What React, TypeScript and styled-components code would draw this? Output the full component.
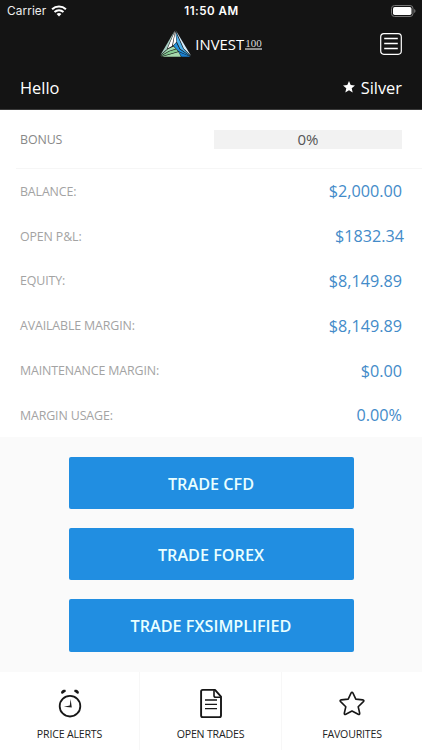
import React from "react";
import styled, { createGlobalStyle } from "styled-components";

const GlobalStyle = createGlobalStyle`
  * { box-sizing: border-box; }
  body { margin: 0; background: #fafafa; font-family: "Open Sans", "Noto Sans", sans-serif; }
`;

const Screen = styled.div`
  width: 422px;
  height: 750px;
  display: flex;
  flex-direction: column;
  overflow: hidden;
  background: #fafafa;
`;

const Header = styled.header`
  height: 110px;
  flex: none;
  background: #141414;
  border-bottom: 1px solid #3a3a3a;
  color: #fff;
`;

const StatusBar = styled.div`
  height: 22px;
  padding: 0 6px 0 7px;
  display: grid;
  grid-template-columns: 1fr auto 1fr;
  align-items: center;
  font-family: Inter, sans-serif;
`;

const Carrier = styled.div`
  display: flex;
  align-items: center;
  gap: 5px;
  font-size: 11.8px;
  letter-spacing: 0.1px;
  color: #eee;
`;

const Clock = styled.div`
  font-size: 11.6px;
  font-weight: 600;
  letter-spacing: 0.5px;
`;

const BatterySlot = styled.div`
  display: flex;
  justify-content: flex-end;
`;

const BrandBar = styled.div`
  height: 43px;
  padding: 0 20px;
  display: grid;
  grid-template-columns: 1fr auto 1fr;
  align-items: center;
`;

const Brand = styled.div`
  grid-column: 2;
  display: flex;
  align-items: center;
  gap: 4px;
`;

const BrandName = styled.div`
  display: flex;
  align-items: flex-start;
  font-size: 14.8px;
  letter-spacing: 0.05px;
  line-height: 20px;
`;

const BrandNumber = styled.span`
  margin: 5px 0 0 1px;
  height: 11px;
  border-bottom: 2px solid #8e8e8e;
  font-family: "Liberation Serif", serif;
  font-size: 11px;
  letter-spacing: 0;
  line-height: 8px;
  color: #ddd;
`;

const MenuButton = styled.button`
  justify-self: end;
  width: 22px;
  height: 22px;
  padding: 0;
  border: 0;
  background: none;
  svg { display: block; }
`;

const Greeting = styled.div`
  height: 44px;
  padding: 0 20px;
  display: flex;
  align-items: center;
  justify-content: space-between;
  font-size: 16.4px;
`;

const Tier = styled.div`
  display: flex;
  align-items: center;
  gap: 6px;
`;

const Account = styled.section`
  height: 327px;
  flex: none;
  background: #fff;
`;

const BonusRow = styled.div`
  height: 59px;
  margin-left: 16px;
  padding: 0 20px 0 4px;
  display: flex;
  align-items: center;
  justify-content: space-between;
  border-bottom: 1px solid #f6f6f6;
  font-size: 12.4px;
  letter-spacing: -0.1px;
  color: #888;
`;

const BonusMeter = styled.div`
  width: 188px;
  height: 19px;
  background: #f2f2f2;
  text-align: center;
  font-size: 15px;
  letter-spacing: 0;
  line-height: 19px;
  color: #555;
`;

const StatRow = styled.div`
  height: 44.8px;
  padding: 0 20px;
  display: flex;
  align-items: center;
  justify-content: space-between;
`;

const StatLabel = styled.span`
  font-size: 12.4px;
  letter-spacing: -0.13px;
  color: #a3a3a3;
`;

const StatValue = styled.span<{ $outset?: number }>`
  margin-right: ${(p) => -(p.$outset ?? 0)}px;
  font-size: 16.2px;
  color: #438bc9;
`;

const Actions = styled.div`
  height: 235px;
  flex: none;
  padding: 20px 68.5px 0;
  display: flex;
  flex-direction: column;
  gap: 18.7px;
`;

const TradeButton = styled.button`
  height: 52.4px;
  flex: none;
  padding: 1px 0 0;
  border: 0;
  border-radius: 2px;
  background: #218ee1;
  color: #e9ffff;
  font: 600 16.2px "Open Sans", sans-serif;
`;

const TabBar = styled.nav`
  flex: 1;
  min-height: 0;
  display: grid;
  grid-template-columns: 139px 142px 141px;
  background: #fff;
`;

const Tab = styled.div`
  padding-top: 15px;
  display: flex;
  flex-direction: column;
  align-items: center;
  font-size: 10.6px;
  letter-spacing: -0.18px;
  line-height: 15px;
  color: #222;
  & + & { border-left: 1px solid #f7f7f7; }
  svg { display: block; margin-bottom: 6px; }
`;

const WifiIcon = () => (
  <svg width="16" height="12" viewBox="0 0 16 12" fill="none" stroke="#fff">
    <path d="M1.1 4.2C5 .6 11 .6 14.9 4.2" strokeWidth="2.1" />
    <path d="M3.5 7C6.1 4.8 9.9 4.8 12.5 7" strokeWidth="2" />
    <path d="M5.6 8.9C7 7.8 9 7.8 10.4 8.9L8 11.4Z" fill="#fff" stroke="none" />
  </svg>
);

const BatteryIcon = () => (
  <svg width="25" height="12" viewBox="0 0 25 12">
    <rect x=".5" y=".5" width="21.5" height="11" rx="3" fill="none" stroke="#777" />
    <rect x="2" y="2" width="18.5" height="8" rx="1.7" fill="#fff" />
    <path d="M23.3 4v4c1.5-.7 1.5-3.3 0-4Z" fill="#888" />
  </svg>
);

const LogoIcon = () => (
  <svg width="31" height="27" viewBox="0 0 31 27">
    <path d="M14.8 .6 .6 24.8 6.6 19.6Z" fill="#a9cfc4" />
    <path d="M15.2 .6 12 16 7.6 18.4Z" fill="#fff" />
    <path d="M15.4 1.6 16.4 12 12.8 15.8Z" fill="#fff" />
    <path d="M15.7 .2 31 25.8 23.8 18.6Z" fill="#d5ebf9" />
    <path d="M15.9 2.6 23.2 18.8 30.4 26 20.2 18.8 16.8 11.8Z" fill="#4fb0ea" />
    <path d="M16.2 12.6 19.6 19.2 30 26.2 18.6 21.2 13.6 15.8Z" fill="#2492dc" />
    <path d="M18.4 21.8 30.6 26.8H21.6Z" fill="#1a7fd0" />
    <path d="M.2 26 7.8 19.2 13.4 16.4 15.8 18.8 8.8 21Z" fill="#a2dbb0" />
    <path d="M.8 26.4 9 21.6 16.4 19.3 18 21.5 10.4 23.8Z" fill="#86cb93" />
    <path d="M2 26.8 10.8 24.3 18.4 22.1 21 26.8Z" fill="#a5d8ac" />
  </svg>
);

const MenuIcon = () => (
  <svg width="22" height="22" viewBox="0 0 22 22" fill="none" stroke="#fff">
    <rect x=".7" y=".7" width="20.6" height="20.6" rx="3.2" strokeWidth="1.2" />
    <path d="M4.2 5.5h13.6M4.2 10.5h13.6M4.2 15.5h13.6" strokeWidth="1.3" />
  </svg>
);

const TierStar = () => (
  <svg width="12" height="12" viewBox="0 0 12 12" fill="#fff">
    <path d="M6 0 7.7 4.1 12 4.4 8.7 7.3 9.7 11.6 6 9.3 2.3 11.6 3.3 7.3 0 4.4 4.3 4.1Z" />
  </svg>
);

const AlarmIcon = () => (
  <svg width="30" height="34" viewBox="0 0 30 34">
    <circle cx="15" cy="19.2" r="10.3" fill="none" stroke="#171717" strokeWidth="1.8" />
    <path d="M6.3 6.4C5.5 4.3 7.5 2.3 10.3 2.8L11 4.2 7.7 6.7ZM23.7 6.4C24.5 4.3 22.5 2.3 19.7 2.8L19 4.2 22.3 6.7Z" fill="#171717" />
    <path d="M15.6 12 16.8 20.6 8.8 19.8 14.8 18.6Z" fill="#222" />
  </svg>
);

const DocumentIcon = () => (
  <svg width="30" height="34" viewBox="0 0 30 34" fill="none" stroke="#171717" strokeLinejoin="round">
    <path d="M6.7 2.9h12.3l6 6.7v18.9q0 1.6-1.6 1.6H6.7q-1.6 0-1.6-1.6v-24q0-1.6 1.6-1.6Z" strokeWidth="1.9" />
    <path d="M18 3.2v5.2q0 1.8 1.8 1.8h4.8" strokeWidth="1.6" />
    <path d="M9 13h12M9 17.4h12M9 21.7h12" strokeWidth="1.3" />
  </svg>
);

const StarIcon = () => (
  <svg width="30" height="34" viewBox="0 0 30 34" fill="none" stroke="#171717" strokeWidth="1.6" strokeLinejoin="round">
    <path d="M14 6.2q1-2 2 0l2.8 5.9 6.9.8q2 .3.7 1.7l-5.2 5.1 1.5 6.5q.2 1.9-1.5 1L15 24l-6.2 3.2q-1.7.9-1.5-1l1.5-6.5-5.2-5.1q-1.3-1.4.7-1.7l6.9-.8Z" />
  </svg>
);

const stats = [
  { label: "BALANCE:", value: "$2,000.00" },
  { label: "OPEN P&L:", value: "$1832.34", outset: 2 },
  { label: "EQUITY:", value: "$8,149.89" },
  { label: "AVAILABLE MARGIN:", value: "$8,149.89" },
  { label: "MAINTENANCE MARGIN:", value: "$0.00" },
  { label: "MARGIN USAGE:", value: "0.00%" },
];

export default function App() {
  return (
    <Screen>
      <GlobalStyle />
      <Header>
        <StatusBar>
          <Carrier>Carrier <WifiIcon /></Carrier>
          <Clock>11:50 AM</Clock>
          <BatterySlot><BatteryIcon /></BatterySlot>
        </StatusBar>
        <BrandBar>
          <Brand>
            <LogoIcon />
            <BrandName>INVEST<BrandNumber>100</BrandNumber></BrandName>
          </Brand>
          <MenuButton aria-label="Menu"><MenuIcon /></MenuButton>
        </BrandBar>
        <Greeting>
          <span>Hello</span>
          <Tier><TierStar />Silver</Tier>
        </Greeting>
      </Header>
      <Account>
        <BonusRow>BONUS<BonusMeter>0%</BonusMeter></BonusRow>
        {stats.map((s) => (
          <StatRow key={s.label}>
            <StatLabel>{s.label}</StatLabel>
            <StatValue $outset={s.outset}>{s.value}</StatValue>
          </StatRow>
        ))}
      </Account>
      <Actions>
        <TradeButton>TRADE CFD</TradeButton>
        <TradeButton>TRADE FOREX</TradeButton>
        <TradeButton>TRADE FXSIMPLIFIED</TradeButton>
      </Actions>
      <TabBar>
        <Tab><AlarmIcon />PRICE ALERTS</Tab>
        <Tab><DocumentIcon />OPEN TRADES</Tab>
        <Tab><StarIcon />FAVOURITES</Tab>
      </TabBar>
    </Screen>
  );
}
